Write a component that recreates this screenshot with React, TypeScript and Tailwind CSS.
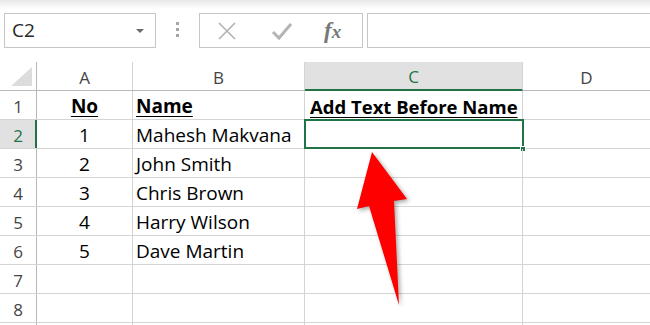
import React from 'react';

const rows = [
  { n: 1, a: 'No', b: 'Name', c: 'Add Text Before Name', head: true },
  { n: 2, a: '1', b: 'Mahesh Makvana', c: '' },
  { n: 3, a: '2', b: 'John Smith', c: '' },
  { n: 4, a: '3', b: 'Chris Brown', c: '' },
  { n: 5, a: '4', b: 'Harry Wilson', c: '' },
  { n: 6, a: '5', b: 'Dave Martin', c: '' },
  { n: 7, a: '', b: '', c: '' },
  { n: 8, a: '', b: '', c: '' },
  { n: 9, a: '', b: '', c: '' },
];

function FormulaBar() {
  return (
    <div className="h-[62px] flex items-start pt-[13px] bg-[linear-gradient(to_bottom,#e8e8e8_0px,#ffffff_9px)]">
      {/* name box */}
      <div className="ml-[4px] w-[152px] h-[35px] border border-[#c6c6c6] bg-white flex items-center justify-between pl-[7px] pr-[11px]">
        <span className="text-[19px] text-[#262626]">C2</span>
        <span className="w-0 h-0 border-l-[4px] border-r-[4px] border-t-[4px] border-l-transparent border-r-transparent border-t-[#6b6b6b]" />
      </div>
      {/* grip dots */}
      <div className="ml-[20px] mt-[9px] flex flex-col gap-[3px]">
        <span className="w-[3px] h-[3px] bg-[#a6a6a6]" />
        <span className="w-[3px] h-[3px] bg-[#a6a6a6]" />
        <span className="w-[3px] h-[3px] bg-[#a6a6a6]" />
      </div>
      {/* cancel / enter / fx */}
      <div className="ml-[20px] w-[164px] h-[35px] border border-[#c6c6c6] bg-white flex items-center">
        <svg width="20" height="20" viewBox="0 0 20 20" className="ml-[17px]">
          <path d="M2 2 L18 18 M18 2 L2 18" stroke="#b4b4b4" strokeWidth="1.7" fill="none" />
        </svg>
        <svg width="22" height="20" viewBox="0 0 22 20" className="ml-[34px]">
          <path d="M2 11 L8 17 L20 3" stroke="#b4b4b4" strokeWidth="3" fill="none" />
        </svg>
        <span className="ml-[31px] text-[23px] italic font-bold text-[#787878] font-['Liberation_Serif',serif] leading-none">
          f<span className="text-[19px]">x</span>
        </span>
      </div>
      {/* formula input */}
      <div className="ml-[4px] flex-1 h-[35px] border border-r-0 border-[#c6c6c6] bg-white" />
    </div>
  );
}

function ColumnHeader() {
  return (
    <div className="flex h-[29px] border-b border-[#b8b8b8] text-[17px] text-[#444]">
      <div className="w-[37px] shrink-0 border-r border-[#b8b8b8] relative">
        <svg width="22" height="20" className="absolute right-[3px] bottom-[3px]">
          <polygon points="21,0 21,19 0,19" fill="#dcdcdc" />
        </svg>
      </div>
      <div className="w-[96px] shrink-0 border-r border-[#d4d4d4] flex items-center justify-center pt-[3px]">A</div>
      <div className="w-[172px] shrink-0 border-r border-[#d4d4d4] flex items-center justify-center pt-[3px]">B</div>
      <div className="w-[218px] shrink-0 border-r border-[#d4d4d4] bg-[#e1e1e1] text-[#217346] flex items-center justify-center pt-[3px] border-b-2 border-b-[#217346] -mb-px">C</div>
      <div className="flex-1 flex items-center justify-center pt-[3px]">D</div>
    </div>
  );
}

export default function App() {
  return (
    <div className="w-[650px] h-[325px] overflow-hidden bg-white relative font-['Open_Sans',sans-serif]">
      <FormulaBar />
      <ColumnHeader />
      {rows.map((r) => {
        const sel = r.n === 2;
        return (
          <div key={r.n} className="flex h-[29px] border-b border-[#d4d4d4]">
            <div
              className={
                sel
                  ? 'w-[37px] shrink-0 border-r-2 border-[#217346] bg-[#e1e1e1] text-[#217346] flex items-center justify-center text-[17px] pt-[3px] pl-px'
                  : 'w-[37px] shrink-0 border-r border-[#b8b8b8] text-[#444] flex items-center justify-center text-[17px] pt-[3px]'
              }
            >
              {r.n < 9 ? r.n : ''}
            </div>
            <div
              className={
                'w-[96px] shrink-0 border-r border-[#d4d4d4] flex items-center justify-center text-[19px] text-black pt-[3px]' +
                (r.head ? ' font-bold underline underline-offset-[3px] text-[18.5px]' : '')
              }
            >
              {r.a}
            </div>
            <div
              className={
                'w-[172px] shrink-0 border-r border-[#d4d4d4] flex items-center pl-[3px] text-[19px] text-black pt-[3px] whitespace-nowrap' +
                (r.head ? ' font-bold underline underline-offset-[3px] text-[18.5px]' : '')
              }
            >
              {r.b}
            </div>
            <div
              className={
                'w-[218px] shrink-0 border-r border-[#d4d4d4] flex items-center pl-[5px] text-[18.5px] text-black pt-[3px] whitespace-nowrap relative' +
                (r.head ? ' font-bold underline underline-offset-[3px]' : '')
              }
            >
              {r.c}
              {sel && (
                <>
                  <div className="absolute left-[-1px] top-[-1px] w-[220px] h-[30px] border-2 border-[#217346]" />
                  <div className="absolute right-[-4px] bottom-[-4px] w-[6px] h-[6px] bg-[#217346] border border-white" />
                </>
              )}
            </div>
            <div className="flex-1" />
          </div>
        );
      })}
      {/* red callout arrow */}
      <svg
        width="650"
        height="325"
        className="absolute left-0 top-0 pointer-events-none drop-shadow-[2px_2px_2px_rgba(0,0,0,0.35)]"
      >
        <polygon points="372,152 407,199 394,201 399,305 369,206 357,209" fill="#ff0000" />
      </svg>
    </div>
  );
}
